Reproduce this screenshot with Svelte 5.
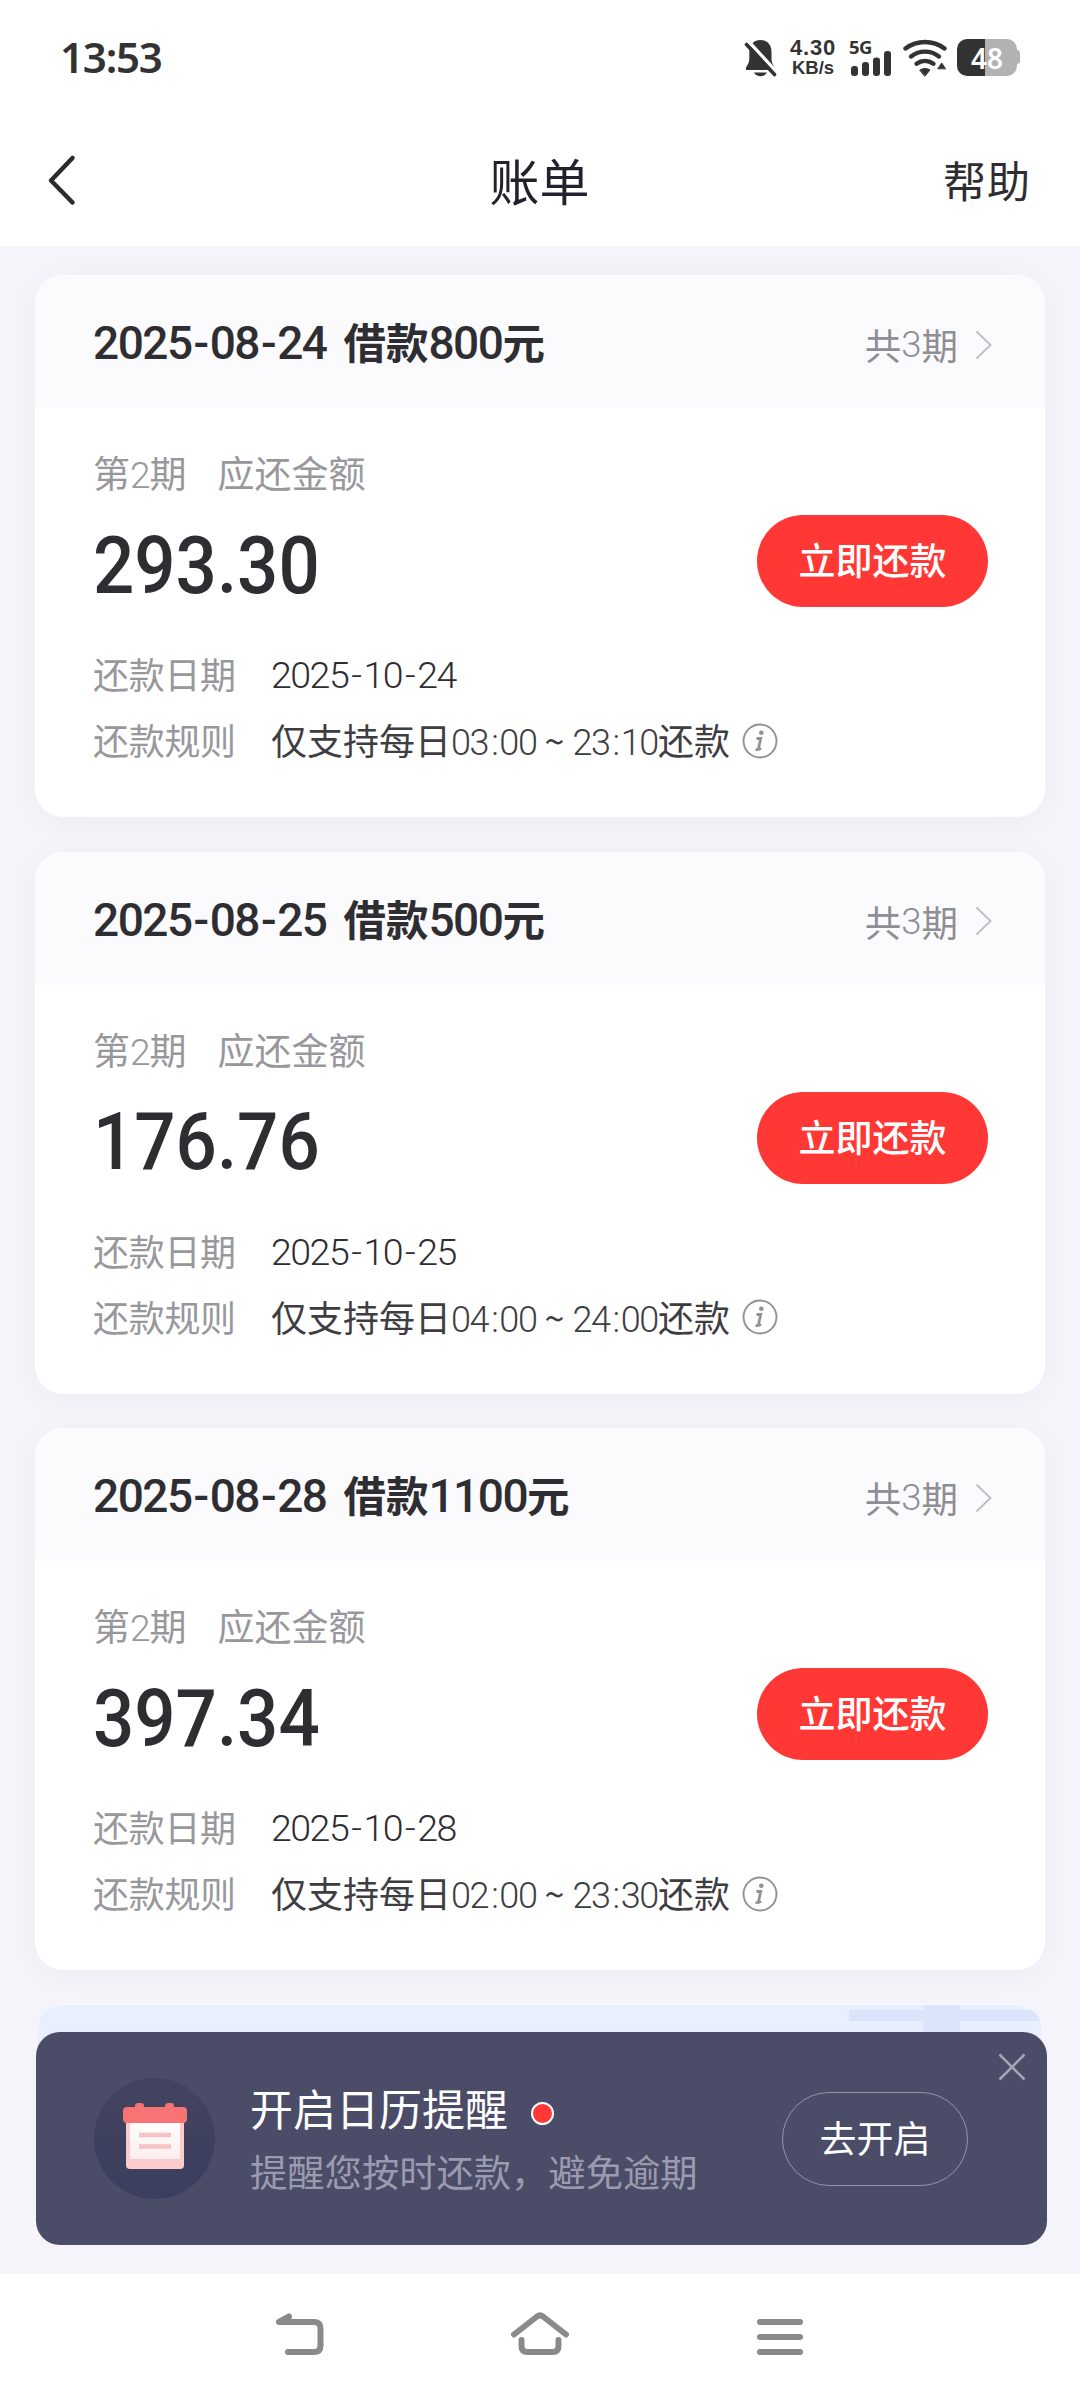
<script>
  const bills = [
    { date: '2025-08-24', loan: '800', total: 3, term: 2, amount: '293.30', due: '2025-10-24', from: '03:00', to: '23:10' },
    { date: '2025-08-25', loan: '500', total: 3, term: 2, amount: '176.76', due: '2025-10-25', from: '04:00', to: '24:00' },
    { date: '2025-08-28', loan: '1100', total: 3, term: 2, amount: '397.34', due: '2025-10-28', from: '02:00', to: '23:30' }
  ];

  let showReminder = $state(true);
</script>

{#snippet day(value)}
  {@const [y, m, d] = value.split('-')}
  <span class="num">{y}<span class="dash">-</span>{m}<span class="dash">-</span>{d}</span>
{/snippet}

{#snippet time(value)}{@const [h, m] = value.split(':')}<span class="num">{h}<span class="colon">:</span>{m}</span>{/snippet}

<div class="screen">
  <div class="status-bar">
    <span class="clock">13:53</span>
    <div class="status-icons">
      <svg class="bell" width="34" height="38" viewBox="0 0 34 38">
        <path d="M16.5 1c6.5 0 11 4.8 11 11.500v7.500c0 3 1.200 5.500 3 8.500v2.500H2v-2.500c2-3 3.300-5.500 3.300-8.500v-7.500C5.300 5.800 10 1 16.500 1z" fill="#333" />
        <path d="M10 33.500h13c-1.500 2.500-3.800 3.700-6.500 3.700s-5-1.200-6.500-3.700z" fill="#333" />
        <path d="M5.500 3.500L34 34.500" stroke="#fff" stroke-width="3.500" />
        <path d="M2.500 5.500L30.500 35.500" stroke="#333" stroke-width="3.600" stroke-linecap="round" />
      </svg>
      <div class="speed">
        <span class="speed-value">4.30</span>
        <span class="speed-unit">KB/s</span>
      </div>
      <div class="signal">
        <span class="network">5G</span>
        <svg width="42" height="26" viewBox="0 0 42 26" fill="#333">
          <rect x="1" y="16" width="7" height="10" rx="3" />
          <rect x="12" y="12" width="7" height="14" rx="3" />
          <rect x="23" y="7.500" width="7" height="18.500" rx="3" />
          <rect x="34" y="1" width="7" height="25" rx="3" />
        </svg>
      </div>
      <svg class="wifi" width="44" height="38" viewBox="0 0 44 38" fill="none" stroke="#333" stroke-width="4.400" stroke-linecap="round">
        <path d="M2.500 9.500C14 .8 30 .8 41.500 9.500" />
        <path d="M8 17.500c8.500-6.500 19.500-6.500 28 0" />
        <path d="M13.500 24.800c5.300-3.900 11.700-3.900 17 0" />
        <path d="M17 31c3-2 7-2 10 0L22 37z" fill="#333" stroke-width="1" />
        <path d="M35 29.500l3.700-5.500 3.700 5.500z" fill="#333" stroke-width="1" />
      </svg>
      <div class="battery"><span>48</span></div>
    </div>
  </div>

  <header class="title-bar">
    <svg width="32" height="52" viewBox="0 0 32 52" fill="none" stroke="#2c2c2e" stroke-width="4.500" stroke-linecap="round" stroke-linejoin="round">
      <path d="M26.500 4L5 26.500 26.500 48.500" />
    </svg>
    <h1>账单</h1>
    <span class="help">帮助</span>
  </header>

  <main>
    {#each bills as bill}
      <section class="card">
        <div class="card-head">
          <h2>{@render day(bill.date)}<span class="loan">借款<span class="num">{bill.loan}</span>元</span></h2>
          <div class="terms">
            共<span class="num">{bill.total}</span>期
            <svg width="18" height="30" viewBox="0 0 18 30" fill="none" stroke="#bcbcc1" stroke-width="1.800">
              <path d="M1.500 1.500L15.500 15 1.500 28.500" />
            </svg>
          </div>
        </div>
        <div class="card-body">
          <div class="period">
            <span>第<span class="num">{bill.term}</span>期</span>
            <span>应还金额</span>
          </div>
          <div class="pay-row">
            <span class="amount">{bill.amount}</span>
            <button class="pay">立即还款</button>
          </div>
          <div class="info">
            <span class="label">还款日期</span>
            <span class="due">{@render day(bill.due)}</span>
          </div>
          <div class="info">
            <span class="label">还款规则</span>
            <span class="rule">仅支持每日{@render time(bill.from)}<span class="tilde">~</span>{@render time(bill.to)}还款</span>
            <svg class="tip" width="36" height="36" viewBox="0 0 36 36">
              <circle cx="18" cy="18" r="16.500" fill="none" stroke="#929292" stroke-width="1.900" />
              <circle cx="19.300" cy="9.800" r="2.300" fill="#929292" />
              <path d="M14.500 15.500h4.200l-2.400 11M13.500 26.800q3.500 0 5.500-1.600" fill="none" stroke="#929292" stroke-width="2.800" />
            </svg>
          </div>
        </div>
      </section>
    {/each}

    <section class="promo">
      <svg width="196" height="70" viewBox="0 0 196 70" fill="#dae5fc">
        <rect x="3" y="5" width="193" height="11" />
        <rect x="77" width="37" height="70" />
      </svg>
    </section>

    {#if showReminder}
      <aside class="reminder">
        <div class="reminder-icon">
          <svg width="66" height="68" viewBox="0 0 66 68">
            <defs>
              <linearGradient id="paper" x1="0" y1="0" x2="0" y2="1">
                <stop offset="0" stop-color="#ffffff" />
                <stop offset="1" stop-color="#fdeeee" />
              </linearGradient>
            </defs>
            <path d="M4 18h58v44q0 4-4 4H8q-4 0-4-4z" fill="#fbcbcd" />
            <path d="M8 18h50v38H8z" fill="url(#paper)" />
            <rect x="13" y="0" width="9" height="12" rx="3" fill="#f47272" />
            <rect x="43" y="0" width="9" height="12" rx="3" fill="#f47272" />
            <rect x="1" y="4" width="64" height="16" rx="4" fill="#f87474" />
            <path d="M17 32h32M17 43.500h32" stroke="#f8c3c4" stroke-width="4.500" />
          </svg>
        </div>
        <div class="reminder-text">
          <h3>开启日历提醒<span class="dot"></span></h3>
          <p>提醒您按时还款，避免逾期</p>
        </div>
        <button class="enable">去开启</button>
        <button class="close" aria-label="关闭" onclick={() => (showReminder = false)}>
          <svg width="28" height="28" viewBox="0 0 28 28" stroke="#a4a5b4" stroke-width="2.600">
            <path d="M1.500 1.500l25 25M26.500 1.500l-25 25" />
          </svg>
        </button>
      </aside>
    {/if}
  </main>

  <nav>
    <svg width="60" height="50" viewBox="0 0 60 50">
      <path d="M19 6.500L9 12h35q6.500 0 6.500 6.500v17q0 6.500-6.500 6.500H18" />
    </svg>
    <svg width="60" height="50" viewBox="0 0 60 50">
      <path d="M4 24.500L27 6.500q3-2.200 6 0L56 24.500M11.500 30v6q0 6 6 6h25q6 0 6-6v-6" />
    </svg>
    <svg width="60" height="50" viewBox="0 0 60 50">
      <path d="M10 12h40M10 27h40M10 42h40" />
    </svg>
  </nav>
</div>

<style>
  :global(body) {
    background: #f4f4fa;
  }
  .screen {
    width: 1080px;
    height: 2400px;
    display: flex;
    flex-direction: column;
    overflow: hidden;
    font-family: "Noto Sans CJK SC", sans-serif;
    color: #2e2e32;
  }
  h1, h2, h3, p {
    margin: 0;
    font-weight: 400;
  }
  button {
    font: inherit;
    border: 0;
    padding: 0;
    background: none;
  }
  svg {
    display: block;
    flex: none;
  }
  .num {
    font-family: Roboto, sans-serif;
  }

  .status-bar {
    height: 116px;
    background: #fff;
    display: flex;
    align-items: center;
    justify-content: space-between;
    padding: 0 63px 1px 60px;
    box-sizing: border-box;
    font-family: "Noto Sans", sans-serif;
    color: #333;
  }
  .clock {
    font-size: 42px;
    font-weight: 600;
    letter-spacing: -1.200px;
    padding-bottom: 2px;
  }
  .status-icons {
    display: flex;
    align-items: center;
  }
  .speed {
    display: flex;
    flex-direction: column;
    align-items: center;
    width: 48px;
    margin: 0 13px 0 11px;
    font-family: "Liberation Sans", sans-serif;
    font-weight: 700;
    line-height: 20px;
  }
  .speed-value {
    font-size: 22px;
    letter-spacing: 0.800px;
  }
  .speed-unit {
    font-size: 18.500px;
  }
  .signal {
    position: relative;
    height: 37px;
    display: flex;
    align-items: flex-end;
  }
  .network {
    position: absolute;
    top: -1px;
    left: -1px;
    font-size: 18.500px;
    line-height: 18px;
    font-weight: 700;
    letter-spacing: -0.500px;
  }
  .wifi {
    margin: 0 10px 0 11px;
  }
  .battery {
    position: relative;
    width: 60px;
    height: 37px;
    border-radius: 10px;
    background: linear-gradient(90deg, #333 28px, #b2b2b2 28px);
    color: #fff;
    font-size: 28px;
    font-weight: 600;
    display: flex;
    align-items: center;
    justify-content: center;
  }
  .battery::after {
    content: "";
    position: absolute;
    right: -3px;
    top: 11px;
    width: 3px;
    height: 14px;
    border-radius: 0 3px 3px 0;
    background: #b2b2b2;
  }

  .title-bar {
    height: 130px;
    background: #fff;
    display: grid;
    grid-template-columns: 1fr auto 1fr;
    align-items: center;
    padding: 0 49px 2px 48px;
    box-sizing: border-box;
  }
  .title-bar svg {
    margin-left: -2px;
  }
  h1 {
    font-size: 50px;
    color: #22222e;
    padding-bottom: 3px;
  }
  .help {
    justify-self: end;
    font-size: 43px;
    letter-spacing: 1px;
    padding-bottom: 3px;
  }

  main {
    position: relative;
    height: 2028px;
    background: #f4f4fa;
    overflow: hidden;
    padding: 29px 35px 0 35px;
    box-sizing: border-box;
    display: flex;
    flex-direction: column;
    gap: 34.500px;
  }
  .card {
    flex: none;
    height: 542px;
    border-radius: 28px;
    background: #fff;
    box-shadow: 0 4px 36px rgba(20, 10, 20, 0.035);
    overflow: hidden;
  }
  .card-head {
    height: 133px;
    background: #fbfbfd;
    display: flex;
    align-items: center;
    justify-content: space-between;
    padding: 0 52px 0 58px;
  }
  h2 {
    display: flex;
    align-items: baseline;
    font-size: 42.500px;
    font-weight: 700;
    padding-bottom: 2px;
  }
  h2 .num {
    font-size: 46px;
    font-weight: 500;
    letter-spacing: -1.500px;
  }
  h2 .dash {
    padding: 0 2px;
  }
  .loan {
    margin-left: 17px;
  }
  .terms {
    display: flex;
    align-items: center;
    font-size: 36.500px;
    color: #8e8e93;
    padding-top: 6px;
  }
  .terms .num {
    font-weight: 300;
  }
  .terms svg {
    margin-left: 17px;
  }
  .card-body {
    padding: 34px 57px 0 58px;
  }
  .period {
    height: 60px;
    display: flex;
    align-items: center;
    gap: 31px;
    font-size: 37px;
    color: #98989c;
  }
  .period .num {
    font-weight: 300;
    letter-spacing: -1px;
  }
  .pay-row {
    height: 92px;
    margin-top: 13px;
    display: flex;
    align-items: center;
    justify-content: space-between;
  }
  .amount {
    font-family: Roboto, sans-serif;
    font-size: 79px;
    line-height: 92px;
    font-weight: 500;
    padding-top: 9px;
    transform: scaleX(0.920);
    transform-origin: left;
  }
  .pay {
    width: 231px;
    height: 92px;
    border-radius: 46px;
    background: #ff3836;
    color: #fff;
    font-size: 37px;
    font-weight: 500;
    line-height: 84px;
    padding-bottom: 4px;
  }
  .info {
    height: 66px;
    display: flex;
    align-items: center;
    font-size: 36px;
  }
  .pay-row + .info {
    margin-top: 33px;
  }
  .label {
    width: 178px;
    color: #98989c;
    letter-spacing: -0.300px;
  }
  .due {
    padding-bottom: 2px;
  }
  .due .num {
    font-size: 37.500px;
    font-weight: 350;
    letter-spacing: -1.500px;
  }
  .due .dash {
    padding: 0 3px;
  }
  .rule {
    color: #3e3e42;
  }
  .rule .num {
    font-weight: 330;
    letter-spacing: -1.400px;
  }
  .colon {
    padding: 0 2px 0 3px;
  }
  .tilde {
    margin: 0 8px;
  }
  .tip {
    margin: 3px 0 0 12px;
  }

  .promo {
    flex: none;
    height: 130px;
    margin: -1px 2px 0 1px;
    border: 1px solid #f8faff;
    border-radius: 26px;
    background: #e8effe;
    overflow: hidden;
    display: flex;
    justify-content: flex-end;
    box-sizing: border-box;
  }

  .reminder {
    position: absolute;
    left: 36px;
    bottom: 29px;
    width: 1011px;
    height: 213px;
    border-radius: 24px;
    background: #4a4c68;
    color: #fff;
    display: flex;
    align-items: center;
    padding: 0 79px 0 58px;
    box-sizing: border-box;
  }
  .reminder-icon {
    width: 121px;
    height: 121px;
    border-radius: 50%;
    background: linear-gradient(#42445f, #3b3e5e);
    display: flex;
    align-items: center;
    justify-content: center;
  }
  .reminder-icon svg {
    margin-bottom: 3px;
  }
  .reminder-text {
    flex: 1;
    margin-left: 35px;
  }
  h3 {
    display: flex;
    align-items: center;
    font-size: 43px;
    line-height: 60px;
  }
  .dot {
    width: 19px;
    height: 19px;
    border: 2px solid #fff;
    border-radius: 50%;
    background: #ff3836;
    margin: 13px 0 0 23px;
  }
  .reminder-text p {
    font-size: 37.300px;
    line-height: 60px;
    margin-top: 4px;
    color: #9a9bae;
  }
  .enable {
    width: 186px;
    height: 94px;
    border: 1px solid #9495a6;
    border-radius: 47px;
    color: #fff;
    font-size: 37px;
    line-height: 86px;
    padding-bottom: 4px;
  }
  .close {
    position: absolute;
    top: 21px;
    right: 21px;
  }

  nav {
    flex: 1;
    background: #fff;
    display: flex;
    justify-content: center;
    gap: 180px;
    padding-top: 36px;
  }
  nav path {
    fill: none;
    stroke: #8a8a8a;
    stroke-width: 6;
    stroke-linecap: round;
    stroke-linejoin: round;
  }
</style>
